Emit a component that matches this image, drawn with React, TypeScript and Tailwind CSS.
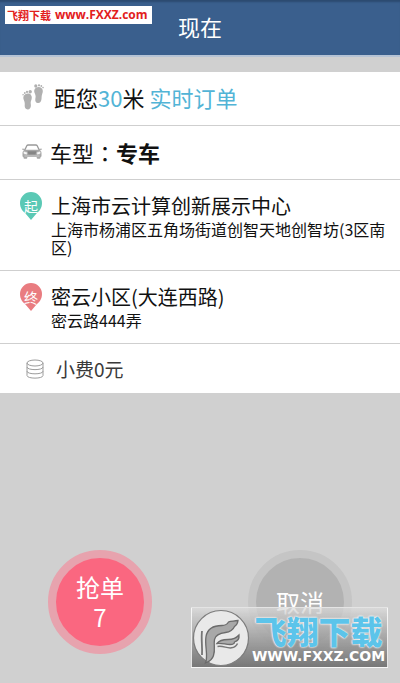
import React from 'react'

type TPinProps = {
  label: string
  className: string
}

type TAddressProps = {
  pin: string
  pinClass: string
  title: string
  detail: string
}

function FootprintsIcon() {
  return (
    <svg viewBox="0 0 22 26" className="h-[26px] w-[22px] flex-shrink-0 fill-[#b0b0b0]" aria-hidden="true">
      <path d="M1.500 12.500C2.500 9.500 7 8.700 8.800 10.700c1.600 1.900 1 4.300.2 6.300-.6 1.500-.2 2.500-.1 4.200.1 2.600-1.200 4.300-3.200 4.300-2.200 0-3.100-1.600-3-3.900.1-1.800.2-2.700-.4-4.400-.6-1.500-1.300-3-.8-4.700z" />
      <path d="M12.300 6c.8-2.900 5-3.900 7.200-1.900 1.900 1.800 1.400 4.100.7 6-.6 1.700-.5 2.800-.7 4.900-.3 2.700-1.600 4.300-3.600 4.100-2.100-.2-2.900-1.900-2.600-4.100.2-1.600.6-2.500 0-4.300-.5-1.600-1.500-3-1-4.700z" />
      <ellipse cx="8.200" cy="7.800" rx="1.700" ry="1.800" />
      <circle cx="5" cy="7.900" r="1.100" />
      <circle cx="2.800" cy="9" r=".9" />
      <circle cx="1.100" cy="10.700" r=".8" />
      <ellipse cx="13.800" cy="2" rx="1.600" ry="1.800" />
      <circle cx="17" cy="1.300" r="1.100" />
      <circle cx="19.300" cy="2" r=".9" />
      <circle cx="21" cy="3.600" r=".8" />
    </svg>
  )
}

function CarIcon() {
  return (
    <svg viewBox="0 0 20 16" className="h-4 w-5 flex-shrink-0" aria-hidden="true">
      <path d="M2.800 6 4.800 1.800Q5.200 1 6.200 1h7.600q1 0 1.400.8L17.200 6" fill="none" stroke="#999" strokeWidth="1.300" />
      <path d="M0 4.800h2.500l.5 1H.5zM20 4.800h-2.500l-.5 1h2.500z" fill="#999" />
      <path d="M2.500 5.800h15q2 1 2 3V12q0 1-1 1v.7q0 1-1 1h-1.800q-1 0-1-1V13H5.300v.7q0 1-1 1H2.500q-1 0-1-1V13q-1 0-1-1V8.800q0-2 2-3z" fill="#a6a6a6" />
      <path d="M5.500 7.200h9l-1 3.200h-7z" fill="#858585" />
      <path d="M1.800 7.800l3 .7v1.700L2 9.800zM18.200 7.800l-3 .7v1.700l2.800-.4zM2.500 12h15" fill="#fff" stroke="#e8e8e8" strokeWidth=".6" />
    </svg>
  )
}

function CoinsIcon() {
  return (
    <svg viewBox="0 0 18 20" className="h-5 w-[18px] flex-shrink-0 fill-none stroke-[#9c9c9c]" aria-hidden="true">
      <ellipse cx="9" cy="4" rx="8" ry="3" />
      <path d="M1 4v12.500c0 3.500 16 3.500 16 0V4M1 8c0 3.500 16 3.500 16 0M1 12.200c0 3.500 16 3.500 16 0" />
    </svg>
  )
}

function Pin({ label, className }: TPinProps) {
  return (
    <div className="relative h-7 w-[22px] flex-shrink-0">
      <svg viewBox="0 0 22 28" className={`h-7 w-[22px] ${className}`} aria-hidden="true">
        <path d="M11 0a11 11 0 0 1 11 11c0 5-2.500 8-5.500 10.500L11 28l-5.500-6.500C2.500 19 0 16 0 11A11 11 0 0 1 11 0z" />
      </svg>
      <span className="absolute inset-x-0 top-1 text-center text-sm leading-5 text-white">{label}</span>
    </div>
  )
}

function AddressRow({ pin, pinClass, title, detail }: TAddressProps) {
  return (
    <li className="flex items-start gap-[9px] border-b border-[#cfcfcf] pb-3 pl-5 pr-2 pt-3">
      <Pin label={pin} className={pinClass} />
      <div className="flex-1">
        <h2 className="text-xl leading-7">{title}</h2>
        <p className="pb-0.5 text-base leading-[18px]">{detail}</p>
      </div>
    </li>
  )
}

function BirdLogo() {
  return (
    <svg viewBox="0 0 58 58" className="h-[58px] w-[58px] flex-shrink-0" aria-hidden="true">
      <circle cx="29" cy="29" r="27.500" fill="#e9e9e9" stroke="#7d7d7d" strokeWidth="1.200" />
      <path d="M13.500 54C16.500 47 12.500 37 14 27.500 15.500 19.500 22 16.500 30 16.500c3.500 0 5-1 6.500-3.500 2.500-1.500 5-.5 9.500-1.500-.3 3-1.300 4.500-3.500 6-1.500 3.500-5 5.500-9 6-6 .7-10 2-11 7-1 5.500 1 10-1 16-1 3.500-4 6-8 7.500z" fill="#a8a8a8" stroke="#6b6b6b" strokeWidth="1.300" />
      <path d="M25 34.500c2.500-3.500 6.500-4 11-4 5.500 0 8.500-1.500 11-4.500.5 4-1.500 6-4.500 7 0 1.500-2 2.500-4.500 2.500-4.500 0-8-1.500-13-1z" fill="#ababab" stroke="#6b6b6b" strokeWidth="1.300" />
      <path d="M25.500 37.500c6-1 9 2 14 1.300 3.500-.5 5-2 6-4.300" fill="none" stroke="#777" strokeWidth="1.500" />
      <path d="M10 22c-1 8 .5 14 0 24" fill="none" stroke="#757575" strokeWidth="1.800" />
    </svg>
  )
}

export default function App() {
  return (
    <main className="flex min-h-screen flex-col bg-[#d0d0d0] font-['Noto_Sans_CJK_SC',sans-serif] text-[#111]">
      <header className="relative flex h-[57px] items-center justify-center border-b-2 border-[#b5c3d5] bg-[#3a5f8d] pb-1 shadow-[inset_0_3px_2px_-1px_#2c4a70]">
        <h1 className="text-[22px] leading-8 text-white">现在</h1>
        <a href="#" className="absolute left-[5px] top-1.5 flex h-[18px] items-center gap-1 bg-white pl-0.5 pr-1 font-bold text-[#e2201c]">
          <span className="text-[11px] leading-4">飞翔下载</span>
          <span className="font-['Open_Sans',sans-serif] text-xs leading-4">www.FXXZ.com</span>
        </a>
      </header>

      <ul className="mt-[15px] bg-white">
        <li className="flex h-[54px] items-center gap-2.5 border-b border-[#cfcfcf] pb-1 pl-[22px]">
          <FootprintsIcon />
          <p className="text-[22px] leading-8">
            距您<span className="text-[#52b4d6]">30</span>米 <span className="text-[#52b4d6]">实时订单</span>
          </p>
        </li>
        <li className="flex h-[54px] items-center gap-2 border-b border-[#cfcfcf] pb-0.5 pl-[22px]">
          <CarIcon />
          <p className="text-[22px] leading-8">
            车型<span className="font-['Noto_Sans_CJK_TC',sans-serif]">：</span><strong>专车</strong>
          </p>
        </li>
        <AddressRow
          pin="起"
          pinClass="fill-[#5bc9b5]"
          title="上海市云计算创新展示中心"
          detail="上海市杨浦区五角场街道创智天地创智坊(3区南区)"
        />
        <AddressRow
          pin="终"
          pinClass="fill-[#e97c80]"
          title="密云小区(大连西路)"
          detail="密云路444弄"
        />
        <li className="flex h-[49px] items-center gap-3 pl-[26px]">
          <CoinsIcon />
          <p className="text-[19px] leading-7 text-[#3a3a3a]">小费0元</p>
        </li>
      </ul>

      <section className="flex flex-1 items-end justify-between px-12 pb-[29px] pt-10 text-2xl leading-[30px] text-white">
        <button className="h-[104px] w-[104px] rounded-full border-8 border-[#e7a3ae] bg-[#fa6780]">
          抢单<br />7
        </button>
        <button className="h-[104px] w-[104px] rounded-full border-8 border-[#c5c5c5] bg-[#b2b2b2]">取消</button>
      </section>

      <a href="#" className="absolute bottom-[15px] right-3 flex h-[61px] w-[197px] items-center border border-white/80 bg-linear-to-b from-[#dcdcdc]/70 to-[#777]">
        <BirdLogo />
        <span className="flex flex-1 flex-col items-center">
          <span className="text-[32px] font-black leading-9 text-[#5cc4ea] [text-shadow:0_0_2px_white,0_0_2px_white]">飞翔下载</span>
          <span className="font-['DejaVu_Sans',sans-serif] text-sm font-bold leading-4 text-white">WWW.FXXZ.COM</span>
        </span>
      </a>
    </main>
  )
}
